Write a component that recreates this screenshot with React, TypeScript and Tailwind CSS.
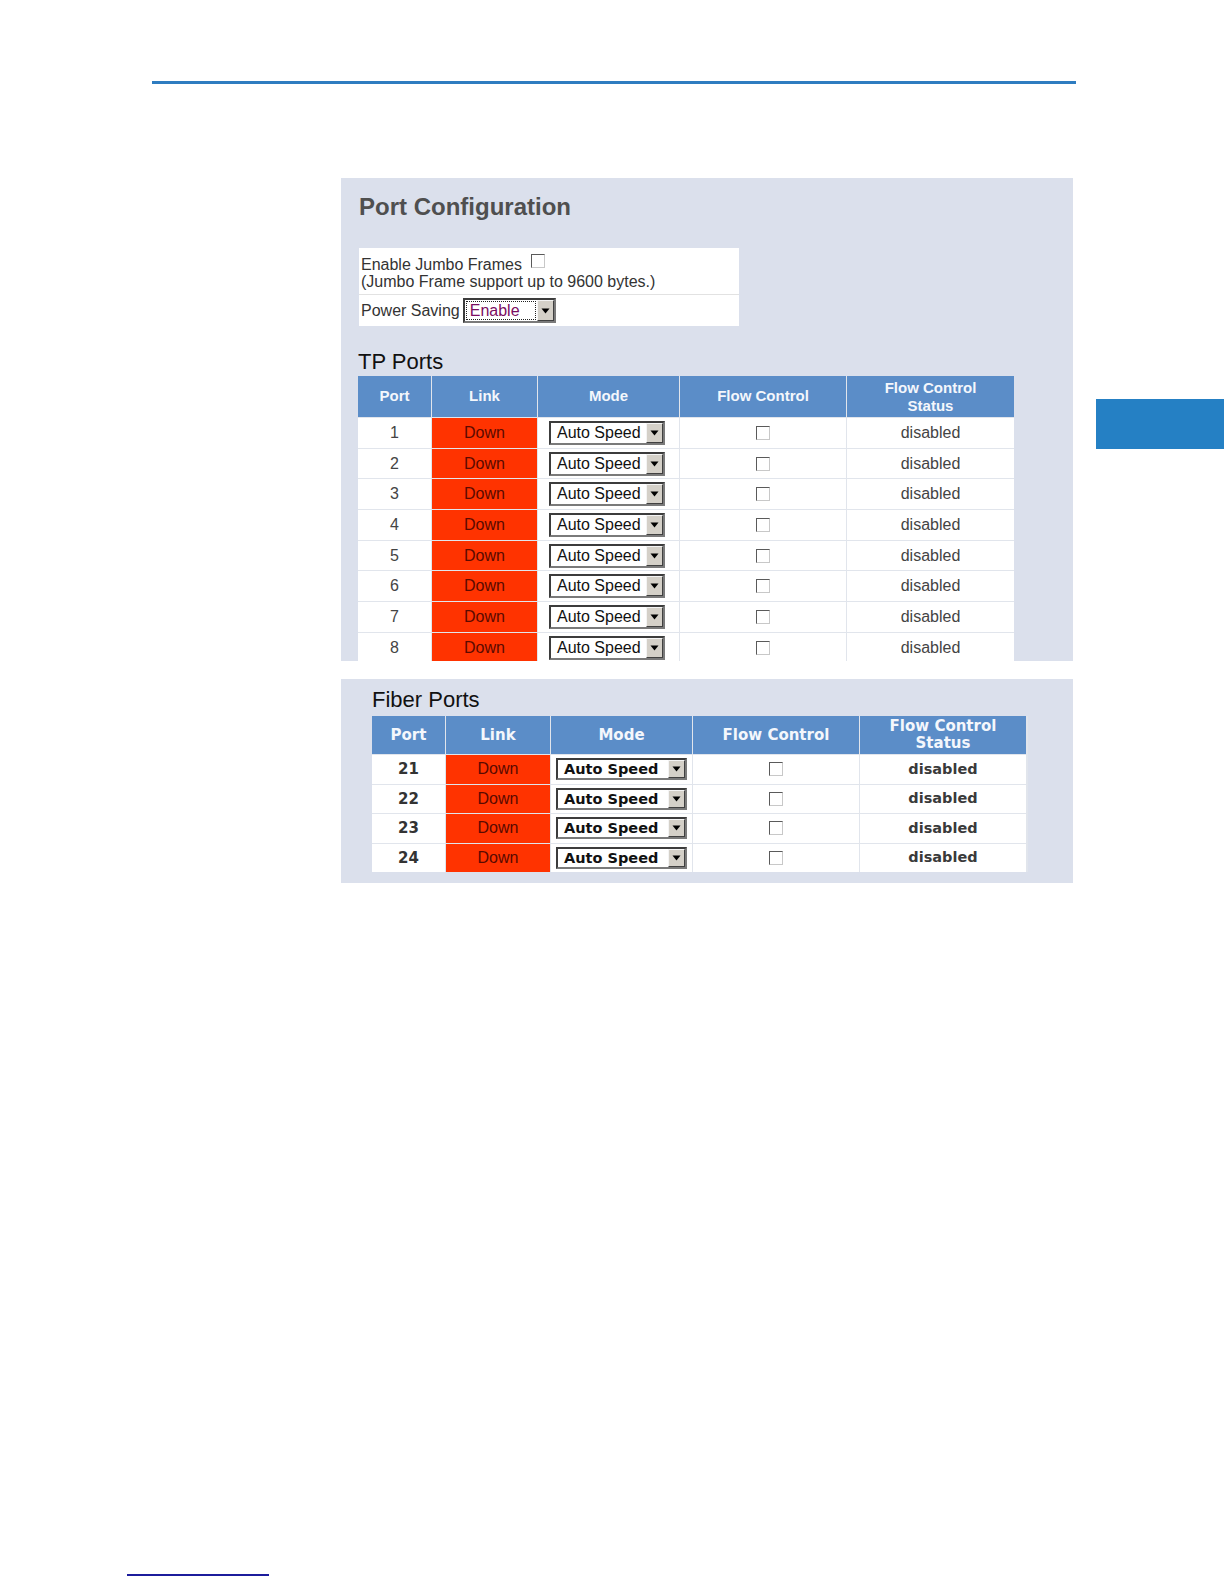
import React from "react";

const arial = "font-['Liberation_Sans',Arial,sans-serif]";
const deja = "font-['DejaVu_Sans',Verdana,sans-serif]";

function Arrow() {
  return (
    <div className="flex w-[17px] shrink-0 items-center justify-center border border-t-[#f4f4f4] border-l-[#f4f4f4] border-r-[#404040] border-b-[#404040] bg-[#d4d0c8]">
      <svg width="9" height="6" viewBox="0 0 9 6">
        <path d="M0.5 0.5 L8.5 0.5 L4.5 5.5 Z" fill="#000" />
      </svg>
    </div>
  );
}

function CheckBox() {
  return (
    <div className="h-[14px] w-[14px] shrink-0 border border-t-[#5a5a5a] border-l-[#5a5a5a] border-r-[#c8c8c8] border-b-[#c8c8c8] bg-white" />
  );
}

function Select({ label, bold }: { label: string; bold?: boolean }) {
  return (
    <div
      className={
        bold
          ? "flex h-[22px] w-[131px] border-2 border-t-[#3c3c3c] border-l-[#3c3c3c] border-r-[#7a7a7a] border-b-[#7a7a7a] bg-white"
          : "flex h-[24px] w-[116px] border-2 border-t-[#3c3c3c] border-l-[#3c3c3c] border-r-[#7a7a7a] border-b-[#7a7a7a] bg-white"
      }
    >
      <div
        className={
          bold
            ? `flex-1 pl-[6px] text-[14.5px] font-bold leading-[18px] text-[#111] ${deja}`
            : `flex-1 pl-[6px] text-[16px] leading-[20px] text-[#111] ${arial}`
        }
      >
        {label}
      </div>
      <Arrow />
    </div>
  );
}

const tpRows = [1, 2, 3, 4, 5, 6, 7, 8];
const fiberRows = [21, 22, 23, 24];

function TpTable() {
  const cols = "grid grid-cols-[73px_105px_141px_166px_167px] gap-x-[1px]";
  return (
    <div className={`flex w-[656px] flex-col gap-y-[1px] bg-[#e1e5ec] ${arial}`}>
      <div className={`${cols} h-[41px]`}>
        {["Port", "Link", "Mode", "Flow Control"].map((h) => (
          <div
            key={h}
            className="flex items-center justify-center bg-[#5b8dc8] text-[15px] font-bold text-[#f4f7fc]"
          >
            {h}
          </div>
        ))}
        <div className="flex flex-col items-center justify-center bg-[#5b8dc8] text-[15px] font-bold leading-[18px] text-[#f4f7fc]">
          <span>Flow Control</span>
          <span>Status</span>
        </div>
      </div>
      {tpRows.map((n) => (
        <div key={n} className={`${cols} h-[29.7px] shrink-0`}>
          <div className="flex items-center justify-center bg-white text-[16px] text-[#444]">{n}</div>
          <div className="flex items-center justify-center bg-[#ff3300] text-[16px] text-[#5a0a00]">Down</div>
          <div className="flex items-center justify-center bg-white pr-[3px]">
            <Select label="Auto Speed" />
          </div>
          <div className="flex items-center justify-center bg-white">
            <CheckBox />
          </div>
          <div className="flex items-center justify-center bg-white text-[16px] text-[#444]">disabled</div>
        </div>
      ))}
    </div>
  );
}

function FiberTable() {
  const cols = "grid grid-cols-[73px_104px_141px_166px_166px] gap-x-[1px]";
  return (
    <div className={`flex w-[656px] flex-col gap-y-[1px] bg-[#e1e5ec] ${deja}`}>
      <div className={`${cols} h-[38px]`}>
        {["Port", "Link", "Mode", "Flow Control"].map((h) => (
          <div
            key={h}
            className="flex items-center justify-center bg-[#5b8dc8] text-[15px] font-bold text-[#f4f7fc]"
          >
            {h}
          </div>
        ))}
        <div className="flex flex-col items-center justify-center bg-[#5b8dc8] text-[15px] font-bold leading-[17px] text-[#f4f7fc]">
          <span>Flow Control</span>
          <span>Status</span>
        </div>
      </div>
      {fiberRows.map((n) => (
        <div key={n} className={`${cols} h-[28.5px] shrink-0`}>
          <div className="flex items-center justify-center bg-white text-[15px] font-bold text-[#333]">{n}</div>
          <div className={`flex items-center justify-center bg-[#ff3300] text-[16px] text-[#5a0a00] ${arial}`}>Down</div>
          <div className="flex items-center justify-center bg-white">
            <Select label="Auto Speed" bold />
          </div>
          <div className="flex items-center justify-center bg-white">
            <CheckBox />
          </div>
          <div className="flex items-center justify-center bg-white pt-[1px] text-[14.5px] font-bold text-[#3a3a3a]">disabled</div>
        </div>
      ))}
    </div>
  );
}

export default function App() {
  return (
    <div className="flex h-[1584px] w-[1224px] flex-col overflow-hidden bg-white">
      <div className="ml-[152px] mt-[81px] h-[3px] w-[924px] bg-[#2e7cc0]" />

      <div className="mt-[94px] flex">
        <div className="ml-[341px] flex w-[732px] flex-col">
          {/* Panel 1 */}
          <div className="flex h-[483px] flex-col overflow-hidden bg-[#dbe0ec] px-[17px] pt-[15px]">
            <div className={`ml-[1px] text-[24px] font-bold leading-[28px] text-[#4f4f4f] ${arial}`}>
              Port Configuration
            </div>
            <div className={`ml-[1px] mt-[27px] flex w-[380px] flex-col bg-white text-[16px] leading-[17px] text-[#333] ${arial}`}>
              <div className="h-[46px] pl-[2px] pt-[8px]">
                <div className="flex items-start">
                  <span>Enable Jumbo Frames</span>
                  <div className="-mt-[2px] ml-[9px]">
                    <CheckBox />
                  </div>
                </div>
                <div>(Jumbo Frame support up to 9600 bytes.)</div>
              </div>
              <div className="h-[1px] bg-[#e2e2e2]" />
              <div className="flex h-[31px] items-center pl-[2px]">
                <span>Power Saving</span>
                <div className="ml-[3px] flex h-[25px] w-[93px] border-2 border-t-[#3c3c3c] border-l-[#3c3c3c] border-r-[#7a7a7a] border-b-[#7a7a7a] bg-white">
                  <div className="m-[1px] flex-1 border border-dotted border-[#222] pl-[3px] text-[16px] leading-[17px] text-[#7a0c62]">
                    Enable
                  </div>
                  <Arrow />
                </div>
              </div>
            </div>
            <div className={`mt-[23px] text-[22px] leading-[26px] text-[#111] ${arial}`}>TP Ports</div>
            <div className="mt-[1px]">
              <TpTable />
            </div>
          </div>

          {/* Panel 2 */}
          <div className="mt-[18px] flex h-[204px] flex-col bg-[#dbe0ec] pl-[31px] pt-[8px]">
            <div className={`text-[22px] leading-[26px] text-[#111] ${arial}`}>Fiber Ports</div>
            <div className="mt-[3px]">
              <FiberTable />
            </div>
          </div>
        </div>

        <div className="ml-[23px] mt-[221px] h-[50px] w-[128px] bg-[#2580c4]" />
      </div>

      <div className="mb-[8px] ml-[127px] mt-auto h-[2px] w-[142px] bg-[#1c1c9c]" />
    </div>
  );
}
